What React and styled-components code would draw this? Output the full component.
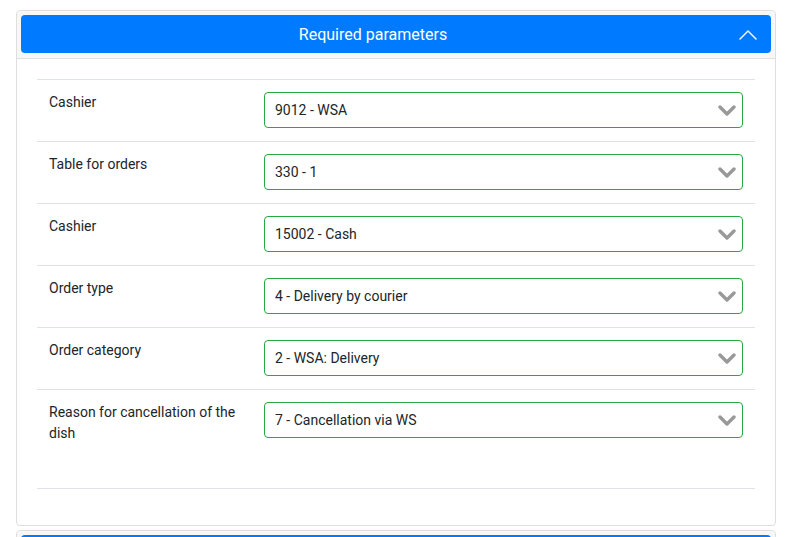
import React from "react";
import styled, { createGlobalStyle } from "styled-components";

const GlobalStyle = createGlobalStyle`
  body {
    margin: 0;
    background: #fff;
    font-family: Roboto, "Liberation Sans", sans-serif;
    color: #212529;
  }
`;

const Page = styled.div`
  padding: 10px 13px 0 16px;
`;

const Card = styled.div`
  border: 1px solid #dfdfdf;
  border-radius: 4px;
  background: #fff;
  margin-bottom: 4px;
`;

const CardHeader = styled.div`
  background: #f7f7f7;
  padding: 4px 4px 5px;
  border-bottom: 1px solid #dfdfdf;
  border-radius: 4px 4px 0 0;
`;

const Toggle = styled.button`
  display: flex;
  align-items: center;
  width: 100%;
  height: 38px;
  padding: 0;
  border: none;
  border-radius: 4px;
  background: #007bff;
  color: #fff;
  font-family: inherit;
  font-size: 16px;
  cursor: pointer;
`;

const ToggleTitle = styled.span`
  flex: 1;
  text-align: center;
`;

const ToggleIcon = styled.span`
  width: 46px;
  display: flex;
  justify-content: center;
`;

const CardBody = styled.div`
  padding: 20px;
`;

const Table = styled.div`
  border-top: 1px solid #dee2e6;
  border-bottom: 1px solid #dee2e6;
  margin-bottom: 16px;
`;

const Row = styled.div`
  display: grid;
  grid-template-columns: 215px 1fr;
  border-top: ${(p) => (p.first ? "none" : "1px solid #dee2e6")};
  min-height: ${(p) => p.minHeight || 61}px;
  box-sizing: border-box;
`;

const Label = styled.div`
  padding: 12px;
  font-size: 14px;
  line-height: 21px;
`;

const Cell = styled.div`
  padding: 12px 12px 13px;
`;

const Select = styled.div`
  display: flex;
  align-items: center;
  height: 36px;
  box-sizing: border-box;
  border: 1px solid #28a745;
  border-radius: 4px;
  padding: 0 6px 0 10px;
  font-size: 14px;
  color: #212529;
`;

const SelectValue = styled.span`
  flex: 1;
`;

const Chevron = ({ up, color, width, stroke }) => (
  <svg width={width} height={Math.round(width * 0.62)} viewBox="0 0 18 11">
    <path
      d={up ? "M1 10 L9 2 L17 10" : "M2 2 L9 9 L16 2"}
      fill="none"
      stroke={color}
      strokeWidth={stroke}
      strokeLinecap="round"
      strokeLinejoin="round"
    />
  </svg>
);

const params = [
  { label: "Cashier", value: "9012 - WSA" },
  { label: "Table for orders", value: "330 - 1" },
  { label: "Cashier", value: "15002 - Cash" },
  { label: "Order type", value: "4 - Delivery by courier" },
  { label: "Order category", value: "2 - WSA: Delivery" },
  { label: "Reason for cancellation of the dish", value: "7 - Cancellation via WS", minHeight: 99 },
];

export default function App() {
  return (
    <>
      <GlobalStyle />
      <Page>
        <Card>
          <CardHeader>
            <Toggle>
              <ToggleTitle>Required parameters</ToggleTitle>
              <ToggleIcon>
                <Chevron up color="#fff" width={18} stroke={1.4} />
              </ToggleIcon>
            </Toggle>
          </CardHeader>
          <CardBody>
            <Table>
              {params.map((p, i) => (
                <Row key={i} first={i === 0} minHeight={p.minHeight}>
                  <Label>{p.label}</Label>
                  <Cell>
                    <Select>
                      <SelectValue>{p.value}</SelectValue>
                      <Chevron color="#999" width={18} stroke={3.4} />
                    </Select>
                  </Cell>
                </Row>
              ))}
            </Table>
          </CardBody>
        </Card>
        <Card>
          <CardHeader>
            <Toggle />
          </CardHeader>
        </Card>
      </Page>
    </>
  );
}
